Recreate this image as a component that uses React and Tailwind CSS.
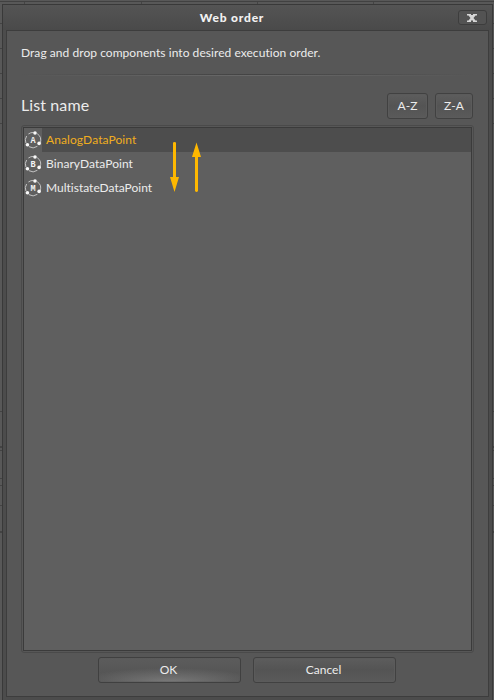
import React from 'react';

const items = [
  { name: 'AnalogDataPoint', letter: 'A', spacing: 'tracking-[0.1px]' },
  { name: 'BinaryDataPoint', letter: 'B', spacing: 'tracking-[0.06px]' },
  { name: 'MultistateDataPoint', letter: 'M', spacing: 'tracking-[0px]' },
];

const edgeRows = [
  'h-[19px] border-b',
  'h-[25px] border-b',
  'h-[25px] border-b',
  'h-[25px] border-b',
  'h-[25px] border-b',
  'h-[288px] border-b',
  'h-[36px] border-b-2',
  'h-[3px] border-b',
  'h-[28px] border-b',
  'h-[7px] border-b',
  'h-[20px] border-b',
  'h-[27px] border-b-2',
];

const PointIcon = ({ letter }) => (
  <svg width="18" height="18" viewBox="0 0 18 18" className="shrink-0">
    <g fill="none" stroke="#c4c4c4" strokeWidth="1">
      <path d="M4.4 3A7.7 7.7 0 0 1 9.6 1.5" />
      <path d="M13.2 2.7A7.7 7.7 0 0 1 16 12" />
      <path d="M13.4 15.3A7.7 7.7 0 0 1 4.8 15.6" />
      <path d="M1.9 12A7.7 7.7 0 0 1 2.6 5" />
    </g>
    <circle cx="11" cy="2" r="1.8" fill="#f8f8f8" />
    <circle cx="15.1" cy="12.4" r="1.8" fill="#f8f8f8" />
    <circle cx="3.4" cy="13.7" r="1.8" fill="#f8f8f8" />
    <text
      x="9"
      y="12"
      textAnchor="middle"
      fill="#f4f4f4"
      className="font-['Liberation_Mono',monospace] text-[8.5px] font-bold"
    >
      {letter}
    </text>
  </svg>
);

const Button = ({ children, className }) => (
  <button
    className={`flex items-center justify-center rounded-[3px] border border-[#414141] bg-linear-to-b from-[#5d5d5d] via-[#545454] to-[#5a5a5a] text-[12px] text-[#ececec] shadow-[inset_0_0_0_1px_#5b5b5b] ${className}`}
  >
    {children}
  </button>
);

const App = () => {
  return (
    <div className="relative flex h-[700px] w-[494px] flex-col overflow-hidden bg-[#585858] px-[2px] pt-[4px] font-['Lato',sans-serif] text-[#ececec] [font-variant-ligatures:none]">
      {/* Grid of the window behind the dialog */}
      <div className="absolute inset-x-0 top-0 h-[4px]">
        <div className="mt-px h-px bg-[#414141]" />
        <div className="absolute left-[24px] top-[2px] h-[2px] w-px bg-[#444444]" />
        <div className="absolute left-[141px] top-[2px] h-[2px] w-px bg-[#444444]" />
        <div className="absolute left-[257px] top-[2px] h-[2px] w-px bg-[#444444]" />
        <div className="absolute left-[373px] top-[2px] h-[2px] w-px bg-[#444444]" />
      </div>
      <div className="absolute left-0 top-[5px] w-[494px]">
        {edgeRows.map((row, i) => (
          <div key={i} className={`border-[#434343] ${row}`} />
        ))}
      </div>

      <div className="relative flex h-[696px] w-[491px] flex-col border-x border-t border-[#393939] bg-[#4c4c4c] px-[3px]">
        <div className="-mx-[3px] flex h-[25px] shrink-0 items-center bg-linear-to-b from-[#545454] to-[#4a4a4a] pl-[3px] pr-[5px]">
          <h1 className="grow text-center text-[12px] font-black leading-[20px] tracking-[0.8px] text-[#f2f2f2]">Web order</h1>
          <button className="flex h-[15px] w-[29px] items-center justify-center rounded-[3px] border border-[#3d3d3d] bg-[#535353]">
            <svg width="10" height="8" viewBox="0 0 10 8" className="mr-px">
              <path
                d="M0 0H4V1H6V0H10V1.5H8.5L6.5 4L8.5 6.5H10V8H6V7L5 6L4 7V8H0V6.5H1.5L3.5 4L1.5 1.5H0Z"
                fill="#d6d6d6"
              />
            </svg>
          </button>
        </div>

        <main className="flex h-[667px] shrink-0 flex-col border border-[#3d3d3d] bg-[#575757] px-[14px]">
          <p className="pt-[12px] text-[12px] leading-[20px] tracking-[0.05px]">Drag and drop components into desired execution order.</p>
          <div className="mt-[11px] h-[2px]">
            <div className="h-px bg-linear-to-r from-transparent via-[#444444] to-transparent" />
            <div className="h-px bg-linear-to-r from-transparent via-[#686868] to-transparent" />
          </div>

          <div className="mt-[17px] flex h-[26px] items-center">
            <h2 className="grow pb-[2px] text-[16px] leading-[24px] tracking-[0.1px]">List name</h2>
            <Button className="mr-[7px] h-[26px] w-[41px] tracking-[0.1px]">A-Z</Button>
            <Button className="mr-px h-[26px] w-[38px] tracking-[0.1px]">Z-A</Button>
          </div>

          <div className="mt-[6px] h-[528px] w-[453px] rounded-[3px] border border-[#4a4a4a] p-px">
            <div className="relative h-full border border-[#3b3b3b] bg-[#5f5f5f]">
              {items.map((item, i) => (
                <div key={item.name} className="flex h-[24px] items-center">
                  <div className="flex h-full w-[18px] items-center">
                    <PointIcon letter={item.letter} />
                  </div>
                  <span
                    className={`flex h-full grow items-center pl-[4px] text-[12px] ${item.spacing} ${i === 0 ? 'bg-[#4d4d4d] text-[#f0ad20]' : ''}`}
                  >
                    {item.name}
                  </span>
                </div>
              ))}
              {/* Drag direction arrows */}
              <svg width="40" height="52" viewBox="0 0 40 52" className="absolute left-[144px] top-[13px]" fill="#ffb800">
                <path d="M5 1.5Q6.5 .5 8 1.5V36H11L6.5 51L2 36H5Z" />
                <path d="M28.5 1.5L33 16H30V50Q28.5 52 27 50V16H24Z" />
              </svg>
            </div>
          </div>

          <div className="mt-[4px] flex pl-[77px]">
            <button className="mr-[12px] flex h-[26px] w-[143px] items-center justify-center rounded-[3px] border border-[#404040] bg-[radial-gradient(ellipse_90px_14px_at_50%_100%,#7a7a7a,transparent),linear-gradient(#5c5c5c,#525252)] pr-[2px] text-[12px] shadow-[inset_0_0_0_1px_#5b5b5b66]">
              OK
            </button>
            <Button className="h-[26px] w-[143px] pr-[2px]">Cancel</Button>
          </div>
        </main>
      </div>
    </div>
  );
};

export default App;
